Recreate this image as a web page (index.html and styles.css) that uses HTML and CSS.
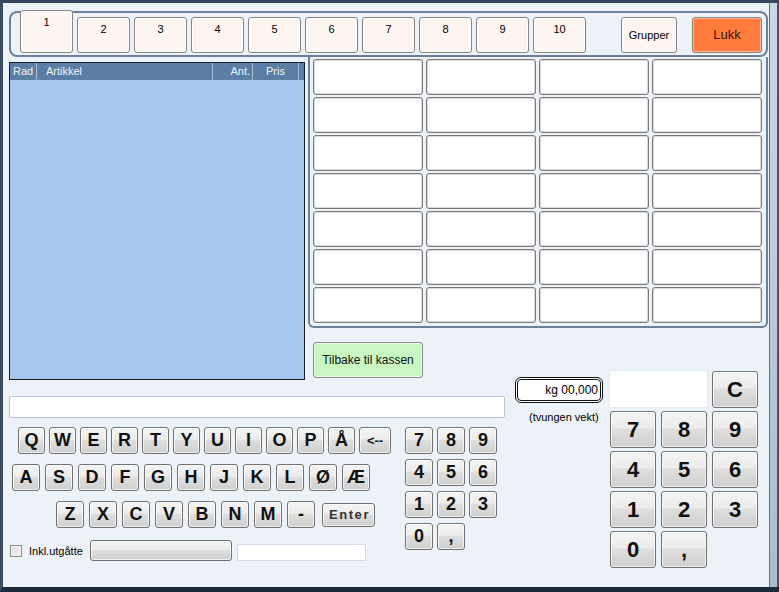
FILE: index.html
```html
<!DOCTYPE html>
<html>
<head>
<meta charset="utf-8">
<title>Kasse</title>
<link rel="stylesheet" href="styles.css">
</head>
<body>
<div class="window">
  <div class="client">
    <div class="tabframe">
      <div class="tab active">1</div>
      <div class="tab">2</div>
      <div class="tab">3</div>
      <div class="tab">4</div>
      <div class="tab">5</div>
      <div class="tab">6</div>
      <div class="tab">7</div>
      <div class="tab">8</div>
      <div class="tab">9</div>
      <div class="tab">10</div>
      <div class="btn-grupper">Grupper</div>
      <div class="btn-lukk">Lukk</div>
    </div>
    <div class="main">
      <div class="list">
        <div class="list-head">
          <div class="col c-rad">Rad</div>
          <div class="col c-art">Artikkel</div>
          <div class="col c-ant">Ant.</div>
          <div class="col c-pris">Pris</div>
        </div>
        <div class="list-body"></div>
      </div>
      <div class="frame">
        <div class="cell"></div><div class="cell"></div><div class="cell"></div><div class="cell"></div>
        <div class="cell"></div><div class="cell"></div><div class="cell"></div><div class="cell"></div>
        <div class="cell"></div><div class="cell"></div><div class="cell"></div><div class="cell"></div>
        <div class="cell"></div><div class="cell"></div><div class="cell"></div><div class="cell"></div>
        <div class="cell"></div><div class="cell"></div><div class="cell"></div><div class="cell"></div>
        <div class="cell"></div><div class="cell"></div><div class="cell"></div><div class="cell"></div>
        <div class="cell"></div><div class="cell"></div><div class="cell"></div><div class="cell"></div>
      </div>
      <div class="back-wrap"><div class="back">Tilbake til kassen</div></div>
      <div class="kg">
        <div class="kg-box">kg 00,000</div>
        <div class="kg-note">(tvungen vekt)</div>
      </div>
      <div class="pad">
        <div class="pad-display"></div>
        <div class="key big c-key">C</div>
        <div class="key big">7</div><div class="key big">8</div><div class="key big">9</div>
        <div class="key big">4</div><div class="key big">5</div><div class="key big">6</div>
        <div class="key big">1</div><div class="key big">2</div><div class="key big">3</div>
        <div class="key big">0</div><div class="key big">,</div>
      </div>
      <div class="bottom">
        <div class="search"></div>
        <div class="kb-area">
          <div class="kb">
            <div class="kb-row r1">
              <div class="key kk">Q</div><div class="key kk">W</div><div class="key kk">E</div><div class="key kk">R</div>
              <div class="key kk">T</div><div class="key kk">Y</div><div class="key kk">U</div><div class="key kk">I</div>
              <div class="key kk">O</div><div class="key kk">P</div><div class="key kk">Å</div><div class="key kk back-key">&lt;--</div>
            </div>
            <div class="kb-row r2">
              <div class="key kk">A</div><div class="key kk">S</div><div class="key kk">D</div><div class="key kk">F</div>
              <div class="key kk">G</div><div class="key kk">H</div><div class="key kk">J</div><div class="key kk">K</div>
              <div class="key kk">L</div><div class="key kk">Ø</div><div class="key kk">Æ</div>
            </div>
            <div class="kb-row r3">
              <div class="key kk">Z</div><div class="key kk">X</div><div class="key kk">C</div><div class="key kk">V</div>
              <div class="key kk">B</div><div class="key kk">N</div><div class="key kk">M</div><div class="key kk">-</div>
              <div class="key enter">Enter</div>
            </div>
            <div class="opts">
              <span class="check"></span>
              <span class="opt-label">Inkl.utgåtte</span>
              <div class="wide-btn"></div>
              <div class="small-input"></div>
            </div>
          </div>
          <div class="minipad">
            <div class="key mk">7</div><div class="key mk">8</div><div class="key mk">9</div>
            <div class="key mk">4</div><div class="key mk">5</div><div class="key mk">6</div>
            <div class="key mk">1</div><div class="key mk">2</div><div class="key mk">3</div>
            <div class="key mk">0</div><div class="key mk">,</div>
          </div>
        </div>
      </div>
    </div>
  </div>
  <div class="glass"></div>
</div>
</body>
</html>
```
FILE: styles.css
```css
* { box-sizing: border-box; }
html, body { margin: 0; padding: 0; }
body {
  font-family: "Liberation Sans", Arial, sans-serif;
  font-size: 11px;
  color: #000;
  background: #1e2c3d;
}
.window {
  width: 779px;
  height: 592px;
  display: flex;
  background: #22324a;
  border-top: 3px solid #33465c;
  border-left: 3px solid #3b4d62;
  border-bottom: 5px solid #1c2a3b;
}
.client {
  width: 766px;
  height: 584px;
  background: #edf2f8;
  padding: 8px 0 0 6px;
}
.glass {
  width: 10px;
  height: 100%;
  background: linear-gradient(#c9d8e6, #a9bdd1);
  border-left: 1px solid #627387;
  border-right: 2px solid #45566b;
}

/* tab strip */
.tabframe {
  width: 759px;
  height: 46px;
  border: 2px solid #6c8198;
  border-radius: 8px;
  display: flex;
  align-items: flex-end;
  padding: 0 0 2px 9px;
}
.tab, .btn-grupper, .btn-lukk {
  height: 36px;
  border: 1px solid #858585;
  border-radius: 3px;
  box-shadow: inset 0 0 0 1px #ffffff;
  background: #fcf5f0;
  text-align: center;
  font-size: 11px;
  line-height: 13px;
  flex: none;
}
.tab {
  width: 53px;
  margin-right: 4px;
  padding-top: 5px;
}
.tab.active { height: 43px; }
.btn-grupper {
  width: 56px;
  margin-left: 31px;
  line-height: 34px;
}
.btn-lukk {
  width: 70px;
  margin-left: 15px;
  background: #ff7b3c;
  box-shadow: inset 0 0 0 1px #ffb38e;
  color: #3a1405;
  font-size: 13px;
  line-height: 34px;
}

/* main grid */
.main {
  display: grid;
  grid-template-columns: 299px 201px 100px 159px;
  grid-template-rows: 271px 42px 10px 190px;
  grid-template-areas:
    "list frame frame frame"
    "list back . ."
    "list back kg pad"
    "bottom bottom kg pad";
}

/* list */
.list {
  grid-area: list;
  margin-top: 5px;
  width: 296px;
  height: 318px;
  border: 1px solid #16202c;
  background: #a6c8ed;
  display: flex;
  flex-direction: column;
}
.list-head {
  height: 17px;
  background: #5b7ea5;
  display: flex;
  color: #eef3f8;
  line-height: 17px;
  font-size: 11px;
}
.col { border-right: 1px solid #a9bed3; height: 17px; }
.c-rad { width: 27px; padding-left: 3px; }
.c-art { width: 176px; padding-left: 9px; }
.c-ant { width: 40px; text-align: right; padding-right: 2px; }
.c-pris { width: 46px; text-align: center; }

/* article button frame: joins the tab frame above */
.frame {
  grid-area: frame;
  border: 2px solid #6c8198;
  border-top: none;
  border-radius: 0 0 6px 6px;
  display: grid;
  grid-template-columns: repeat(4, 110px);
  grid-auto-rows: 36px;
  gap: 2px 3px;
  padding: 2px 3px 0 3px;
}
.cell {
  background: #ffffff;
  border: 1px solid #7b7b7b;
  border-radius: 3px;
  box-shadow: inset 0 0 0 1px #d9d9d9;
}

.back-wrap { grid-area: back; padding: 14px 0 0 5px; }
.back {
  width: 110px;
  height: 36px;
  background: #c8f7c1;
  border: 1px solid #8c8c8c;
  border-radius: 3px;
  box-shadow: inset 0 0 0 1px #e6fce3;
  font-size: 12px;
  display: flex;
  align-items: center;
  justify-content: center;
  color: #111;
}

/* weight */
.kg { grid-area: kg; padding: 7px 0 0 6px; }
.kg-box {
  width: 88px;
  height: 26px;
  border: 3px double #111;
  border-radius: 6px;
  background: #fff;
  text-align: right;
  padding-right: 2px;
  font-size: 12px;
  line-height: 20px;
}
.kg-note {
  margin-top: 8px;
  padding-left: 14px;
  font-size: 11px;
  line-height: 13px;
}

/* keys */
.key {
  background: linear-gradient(#f4f4f4 0%, #ececec 45%, #dedede 50%, #cfcfcf 100%);
  border: 1px solid #727272;
  border-radius: 3px;
  box-shadow: inset 0 0 0 1px rgba(255,255,255,0.65);
  display: flex;
  align-items: center;
  justify-content: center;
  font-weight: bold;
  color: #111;
  flex: none;
}

/* big numpad */
.pad {
  grid-area: pad;
  display: grid;
  grid-template-columns: repeat(3, 46px);
  grid-template-rows: 38px repeat(4, 37px);
  gap: 3px 5px;
  padding-left: 1px;
}
.pad-display {
  grid-column: 1 / 3;
  margin-left: -1px;
  margin-right: -1px;
  background: #fff;
  border: 1px solid #e3e9ef;
}
.c-key { margin-top: 1px; }
.big { font-size: 22px; }

/* bottom left */
.bottom { grid-area: bottom; padding-top: 16px; }
.search {
  width: 496px;
  height: 22px;
  background: #fff;
  border: 1px solid #b7c6d6;
  border-radius: 2px;
}
.kb-area { display: flex; margin-top: 9px; }
.kb { width: 396px; }
.kb-row { display: flex; height: 27px; align-items: center; }
.r1 { padding-left: 9px; gap: 4px; }
.r2 { padding-left: 3px; gap: 5px; margin-top: 10px; }
.r3 { padding-left: 47px; gap: 5px; margin-top: 10px; }
.kk { width: 28px; height: 27px; font-size: 18px; }
.r1 .kk { width: 27px; }
.r1 .back-key { width: 32px; font-size: 13px; }
.enter {
  width: 53px;
  height: 24px;
  margin-left: 2px;
  font-size: 13px;
  letter-spacing: 1.6px;
  padding-left: 2px;
  color: #333;
}
.opts {
  display: flex;
  align-items: center;
  height: 21px;
  margin-top: 12px;
}
.check {
  width: 12px;
  height: 12px;
  margin-left: 1px;
  border: 1px solid #8e8f8f;
  background: linear-gradient(135deg, #dcdcdc, #f6f6f6);
  box-shadow: inset 0 0 0 1px #f4f4f4;
}
.opt-label { margin-left: 7px; font-size: 11px; }
.wide-btn {
  width: 142px;
  height: 21px;
  margin-left: 7px;
  border: 1px solid #727272;
  border-radius: 3px;
  background: linear-gradient(#f4f4f4 0%, #ececec 45%, #dedede 50%, #cfcfcf 100%);
  box-shadow: inset 0 0 0 1px rgba(255,255,255,0.65);
}
.small-input {
  width: 129px;
  height: 17px;
  margin-left: 5px;
  align-self: flex-end;
  background: #fff;
  border: 1px solid #d3dce6;
}
.minipad {
  display: grid;
  grid-template-columns: repeat(3, 28px);
  grid-auto-rows: 27px;
  gap: 5px 4px;
}
.mk { font-size: 18px; }
```
